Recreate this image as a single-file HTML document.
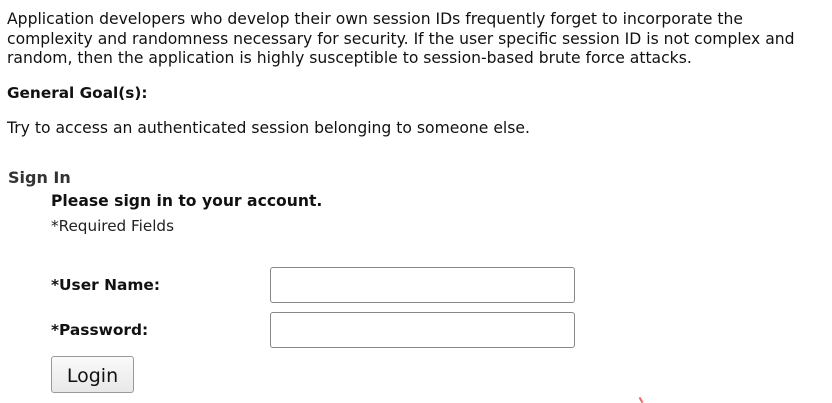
<!DOCTYPE html>
<html><head><style>
body{margin:0;width:832px;height:403px;background:#fff;font-family:"DejaVu Sans","Liberation Sans",sans-serif;color:#111;overflow:hidden;position:relative}
.a{position:absolute;white-space:nowrap}
p.a{margin:0;font-size:15.6px;line-height:19.7px}
.in{position:absolute;left:270px;width:303px;height:34px;border:1px solid #888;border-radius:3px;background:#fff}
</style></head><body>
<p class="a" style="left:7px;top:10px">Application developers who develop their own session IDs frequently forget to incorporate the<br>complexity and randomness necessary for security. If the user specific session ID is not complex and<br>random, then the application is highly susceptible to session-based brute force attacks.</p>
<div class="a" style="left:7px;top:84px;font-size:15.3px;font-weight:bold">General Goal(s):</div>
<div class="a" style="left:7px;top:119px;font-size:15.6px">Try to access an authenticated session belonging to someone else.</div>
<div class="a" style="left:8px;top:168px;font-size:16px;font-weight:bold;color:#333">Sign In</div>
<div class="a" style="left:51px;top:192px;font-size:15.6px;font-weight:bold">Please sign in to your account.</div>
<div class="a" style="left:51px;top:217px;font-size:15.2px;color:#222">*Required Fields</div>
<div class="a" style="left:51px;top:276px;font-size:15.4px;font-weight:bold">*User Name:</div>
<div class="a" style="left:51px;top:321px;font-size:15.4px;font-weight:bold">*Password:</div>
<div class="in" style="top:267px"></div>
<div class="in" style="top:312px"></div>
<div class="a" style="left:51px;top:356px;width:81px;height:35px;border:1px solid #999;border-radius:3px;background:linear-gradient(#fafafa,#e8e8e8);font-size:19px;line-height:38px;text-align:center;color:#111">Login</div>
<div class="a" style="left:640px;top:397px;width:2px;height:6px;background:#e66;transform:rotate(-30deg)"></div>
</body></html>
